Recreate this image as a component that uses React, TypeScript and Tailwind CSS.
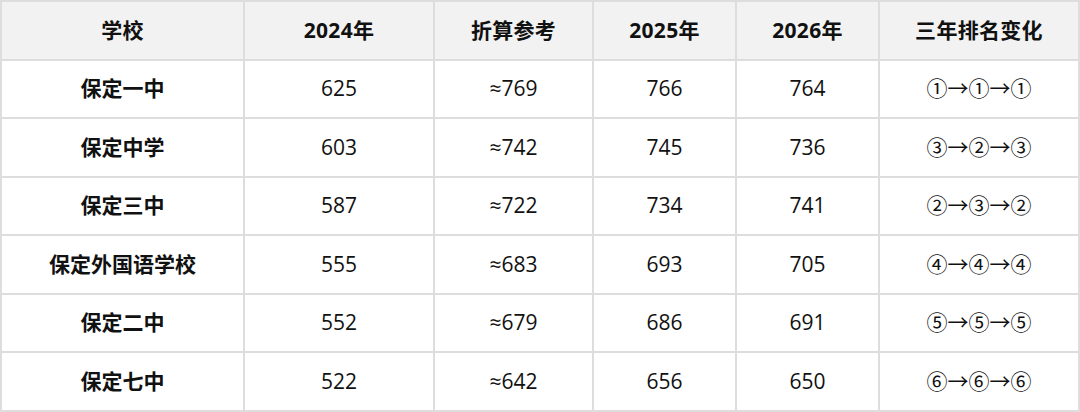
const headers = ["学校", "2024年", "折算参考", "2025年", "2026年", "三年排名变化"];

const rows = [
  ["保定一中", "625", "≈769", "766", "764", "①→①→①"],
  ["保定中学", "603", "≈742", "745", "736", "③→②→③"],
  ["保定三中", "587", "≈722", "734", "741", "②→③→②"],
  ["保定外国语学校", "555", "≈683", "693", "705", "④→④→④"],
  ["保定二中", "552", "≈679", "686", "691", "⑤→⑤→⑤"],
  ["保定七中", "522", "≈642", "656", "650", "⑥→⑥→⑥"],
];

const App = () => {
  return (
    <div
      className="grid h-[412px] w-[1080px] grid-cols-[241px_188px_157px_141px_141px_198px] grid-rows-[repeat(7,1fr)] gap-[2px] bg-[#dddddd] p-[2px] text-[#111111]"
      style={{ fontFamily: '"Open Sans", "Noto Sans CJK SC", sans-serif' }}
    >
      {headers.map((h) => (
        <div key={h} className="flex items-center justify-center bg-[#f2f2f2] text-[21px] font-bold tracking-[0.3px]">
          {h}
        </div>
      ))}
      {rows.map((row) =>
        row.map((cell, i) => (
          <div
            key={row[0] + i}
            className={`flex items-center justify-center bg-white ${i === 0 ? "text-[21px] font-bold" : "text-[21px]"}`}
          >
            {cell}
          </div>
        ))
      )}
    </div>
  );
};

export default App;
